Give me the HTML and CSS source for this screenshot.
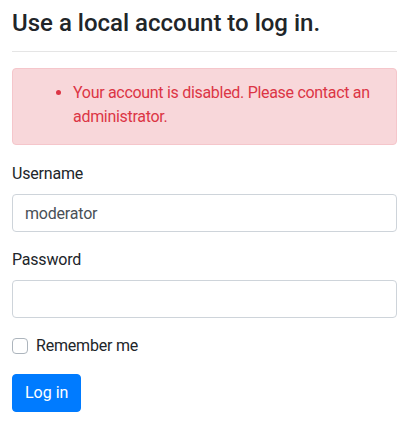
FILE: index.html
```html
<!DOCTYPE html>
<html lang="en">
<head>
<meta charset="utf-8">
<title>Log in</title>
<link rel="stylesheet" href="styles.css">
</head>
<body>
<section class="login">
  <h4 class="title">Use a local account to log in.</h4>
  <hr class="divider">
  <div class="alert">
    <ul class="errors">
      <li>Your account is disabled. Please contact an administrator.</li>
    </ul>
  </div>
  <form class="form">
    <div class="group">
      <label class="label" for="user">Username</label>
      <input class="input" id="user" type="text" value="moderator">
    </div>
    <div class="group">
      <label class="label" for="pass">Password</label>
      <input class="input" id="pass" type="password">
    </div>
    <div class="group check-row">
      <input class="check" id="remember" type="checkbox">
      <label class="check-label" for="remember">Remember me</label>
    </div>
    <div class="actions">
      <button class="btn" type="button">Log in</button>
    </div>
  </form>
</section>
</body>
</html>
```

FILE: styles.css
```css
* { box-sizing: border-box; }
html, body { margin: 0; background: #fff; }
body {
  font-family: "Segoe UI", Roboto, "Liberation Sans", Arial, sans-serif;
  font-size: 16px;
  line-height: 24px;
  letter-spacing: -0.2px;
  color: #212529;
  padding: 9px 21px 0 12px;
}
.title {
  font-size: 24px;
  line-height: 29px;
  font-weight: 500;
  letter-spacing: 0;
  margin: 0;
}
.divider {
  border: 0;
  border-top: 1px solid #e5e5e5;
  margin: 13px 0 16px;
}
.alert {
  background: #f8d7da;
  border: 1px solid #f5c6cb;
  border-radius: 4px;
  padding: 12px 20px 15px;
  color: #dc3545;
  letter-spacing: -0.3px;
  margin-bottom: 17px;
}
.errors {
  margin: 0;
  padding-left: 40px;
}
.group { margin-bottom: 16px; }
.label {
  display: block;
  margin-bottom: 8px;
}
.input {
  display: block;
  width: 100%;
  height: 38px;
  padding: 6px 12px;
  font: inherit;
  letter-spacing: inherit;
  color: #495057;
  border: 1px solid #ced4da;
  border-radius: 4px;
  background: #fff;
}
.check-row {
  display: flex;
  align-items: center;
  gap: 8px;
}
.check {
  appearance: none;
  -webkit-appearance: none;
  width: 16px;
  height: 16px;
  margin: 0;
  border: 1px solid #adb5bd;
  border-radius: 4px;
  background: #fff;
}
.btn {
  font: inherit;
  letter-spacing: 0;
  color: #fff;
  background: #007bff;
  border: 1px solid #007bff;
  border-radius: 4px;
  height: 38px;
  padding: 6px 12px;
}
```
